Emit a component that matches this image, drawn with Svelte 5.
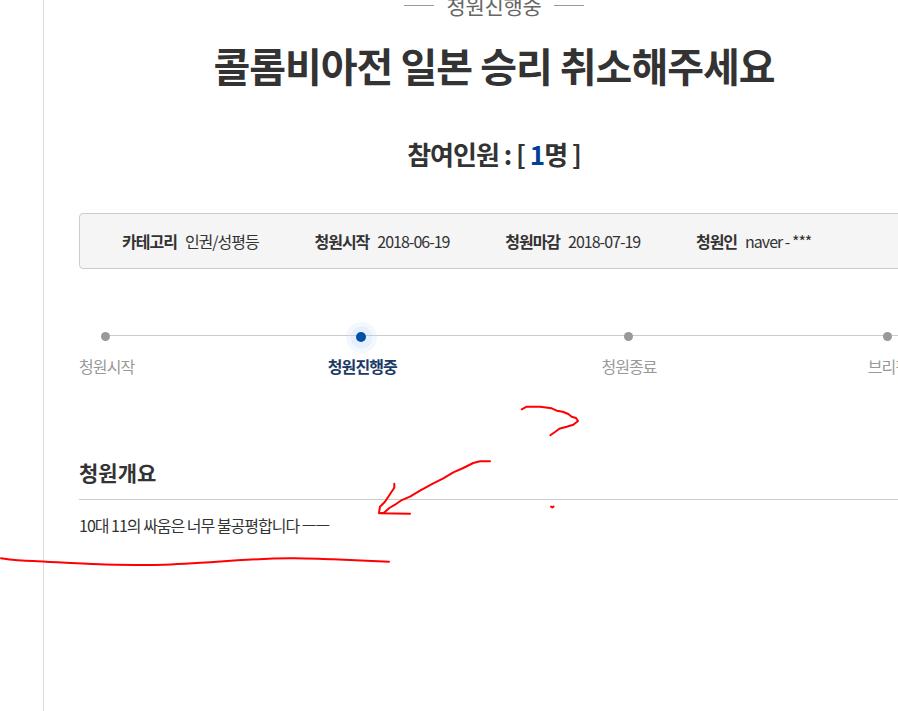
<script>
  const meta = [
    { k: '카테고리', v: '인권/성평등' },
    { k: '청원시작', v: '2018-06-19' },
    { k: '청원마감', v: '2018-07-19' },
    { k: '청원인', v: 'naver - ***' }
  ];
  const steps = [
    { label: '청원시작', cls: 's1' },
    { label: '청원진행중', cls: 's2 on' },
    { label: '청원종료', cls: 's3' },
    { label: '브리핑', cls: 's4' }
  ];
</script>

<div class="page">
  <main class="content">
    <div class="status"><span class="dash"></span><span class="status-text">청원진행중</span><span class="dash"></span></div>
    <h1>콜롬비아전 일본 승리 취소해주세요</h1>
    <h2>참여인원 : <span class="br">[</span> <span class="num">1</span>명 <span class="br">]</span></h2>

    <ul class="meta">
      {#each meta as m}
        <li><b>{m.k}</b><span>{m.v}</span></li>
      {/each}
    </ul>

    <div class="steps">
      <div class="line"></div>
      {#each steps as s}
        <div class={'step ' + s.cls}><i class="dot"></i><span>{s.label}</span></div>
      {/each}
    </div>

    <h3>청원개요</h3>
    <p class="body">10대 11의 싸움은 너무 불공평합니다 ㅡㅡ</p>
  </main>

  <svg class="ink" width="898" height="711" viewBox="0 0 898 711" fill="none" stroke="#f00" stroke-width="2" stroke-linecap="round" stroke-linejoin="round">
    <path d="M521.7 409.3 526.7 406.7 540 406.7 551.7 408.3 556.7 410.7 562.7 411.7 568.3 414 571.7 416.7 576 418 578 421 573.3 424.7 566.7 426.7 559.3 428.7 555 432 550.3 435.3" />
    <path d="M551 506.5 552.3 507.5 553.6 506.5" />
    <path d="M490 461.3 480 461.3 473.3 463 463.3 468 453.3 472.3 443.3 478.3 433.3 483.3 420 490.7 410 496.7 400.7 500.7 395 504.7 389.3 508 384 512.7 379.3 513.3 410 513.7" />
    <path d="M394.3 483.7 394.3 487.7 389.3 495.3 385 501.7 380 506.7 379 512.7" />
    <path d="M1 558.3C12 560 22 561 33 561C55 562 78 564 100 564.3C117 565 133 565 150 565C172 565 195 563 217 561.7C241 560 266 558.5 290 558.3C304 558 319 559 333 559.3C352 560 370 561 389 561.7" />
  </svg>
</div>

<style>
  :global(body) {
    margin: 0;
    background: #fff;
    overflow: hidden;
  }
  .page {
    position: relative;
    width: 898px;
    height: 711px;
    overflow: hidden;
    font-family: "Noto Sans CJK KR", "Noto Sans", sans-serif;
    color: #333;
  }
  .content {
    box-sizing: border-box;
    width: 866px;
    height: 711px;
    margin-left: 43px;
    padding: 0 0 0 35px;
    border-left: 1px solid #ddd;
  }
  .status {
    display: flex;
    justify-content: center;
    align-items: center;
    gap: 12px;
    height: 10px;
    font-size: 21px;
    letter-spacing: -0.3px;
    color: #666;
  }
  .status-text { line-height: 10px; }
  .dash { width: 30px; height: 1px; background: #999; }
  h1 {
    margin: 25px 0 0;
    font-size: 40px;
    line-height: 60px;
    font-weight: 700;
    letter-spacing: -1px;
    text-align: center;
    color: #333;
  }
  h2 {
    margin: 41px 0 0;
    font-size: 26px;
    line-height: 36px;
    font-weight: 700;
    letter-spacing: -1px;
    text-align: center;
    color: #333;
  }
  .br { color: #333; }
  .num { color: #004098; }
  .meta {
    display: flex;
    align-items: center;
    box-sizing: border-box;
    height: 56px;
    margin: 41px 0 0;
    padding: 0 0 0 42px;
    list-style: none;
    background: #f5f5f5;
    border: 1px solid #ccc;
    border-radius: 4px;
    font-size: 16px;
    letter-spacing: -1px;
    gap: 55.7px;
  }
  .meta b { font-weight: 700; margin-right: 8px; color: #333; }
  .meta span { color: #333; }
  .steps {
    position: relative;
    display: flex;
    height: 51px;
    margin-top: 57px;
    font-size: 16px;
    letter-spacing: -0.9px;
    color: #999;
  }
  .line {
    position: absolute;
    left: 26px;
    right: 0;
    top: 9px;
    height: 1px;
    background: #ccc;
    z-index: 1;
  }
  .step {
    display: flex;
    flex-direction: column;
    align-items: center;
    flex: none;
    position: relative;
  }
  .dot {
    display: block;
    flex: none;
    position: relative;
    z-index: 2;
    width: 9px;
    height: 9px;
    margin: 6px 2px 14px 0;
    border-radius: 50%;
    background: #999;
  }
  .step span { line-height: 22px; white-space: nowrap; }
  .s2 { margin-left: 193.5px; }
  .s3 { margin-left: 204.5px; }
  .s4 { margin-left: 211px; }
  .on { color: #1d3a66; font-weight: 700; }
  .on .dot {
    width: 10px;
    height: 10px;
    margin-bottom: 13px;
    background: #0050a8;
  }
  .on::before {
    content: "";
    position: absolute;
    top: -4.5px;
    left: calc(50% - 16.5px);
    width: 31px;
    height: 31px;
    border-radius: 50%;
    background: radial-gradient(circle, #e6f0fc 0 11px, #f3f8fe 11px);
  }
  h3 {
    margin: 80px 0 0;
    padding-bottom: 12px;
    border-bottom: 1px solid #ccc;
    font-size: 21px;
    line-height: 30px;
    font-weight: 700;
    letter-spacing: 0;
    color: #333;
  }
  .body {
    margin: 13px 0 0;
    font-size: 16px;
    line-height: 24px;
    letter-spacing: -1px;
    color: #333;
  }
  .ink {
    position: absolute;
    left: 0;
    top: 0;
    pointer-events: none;
  }
</style>
